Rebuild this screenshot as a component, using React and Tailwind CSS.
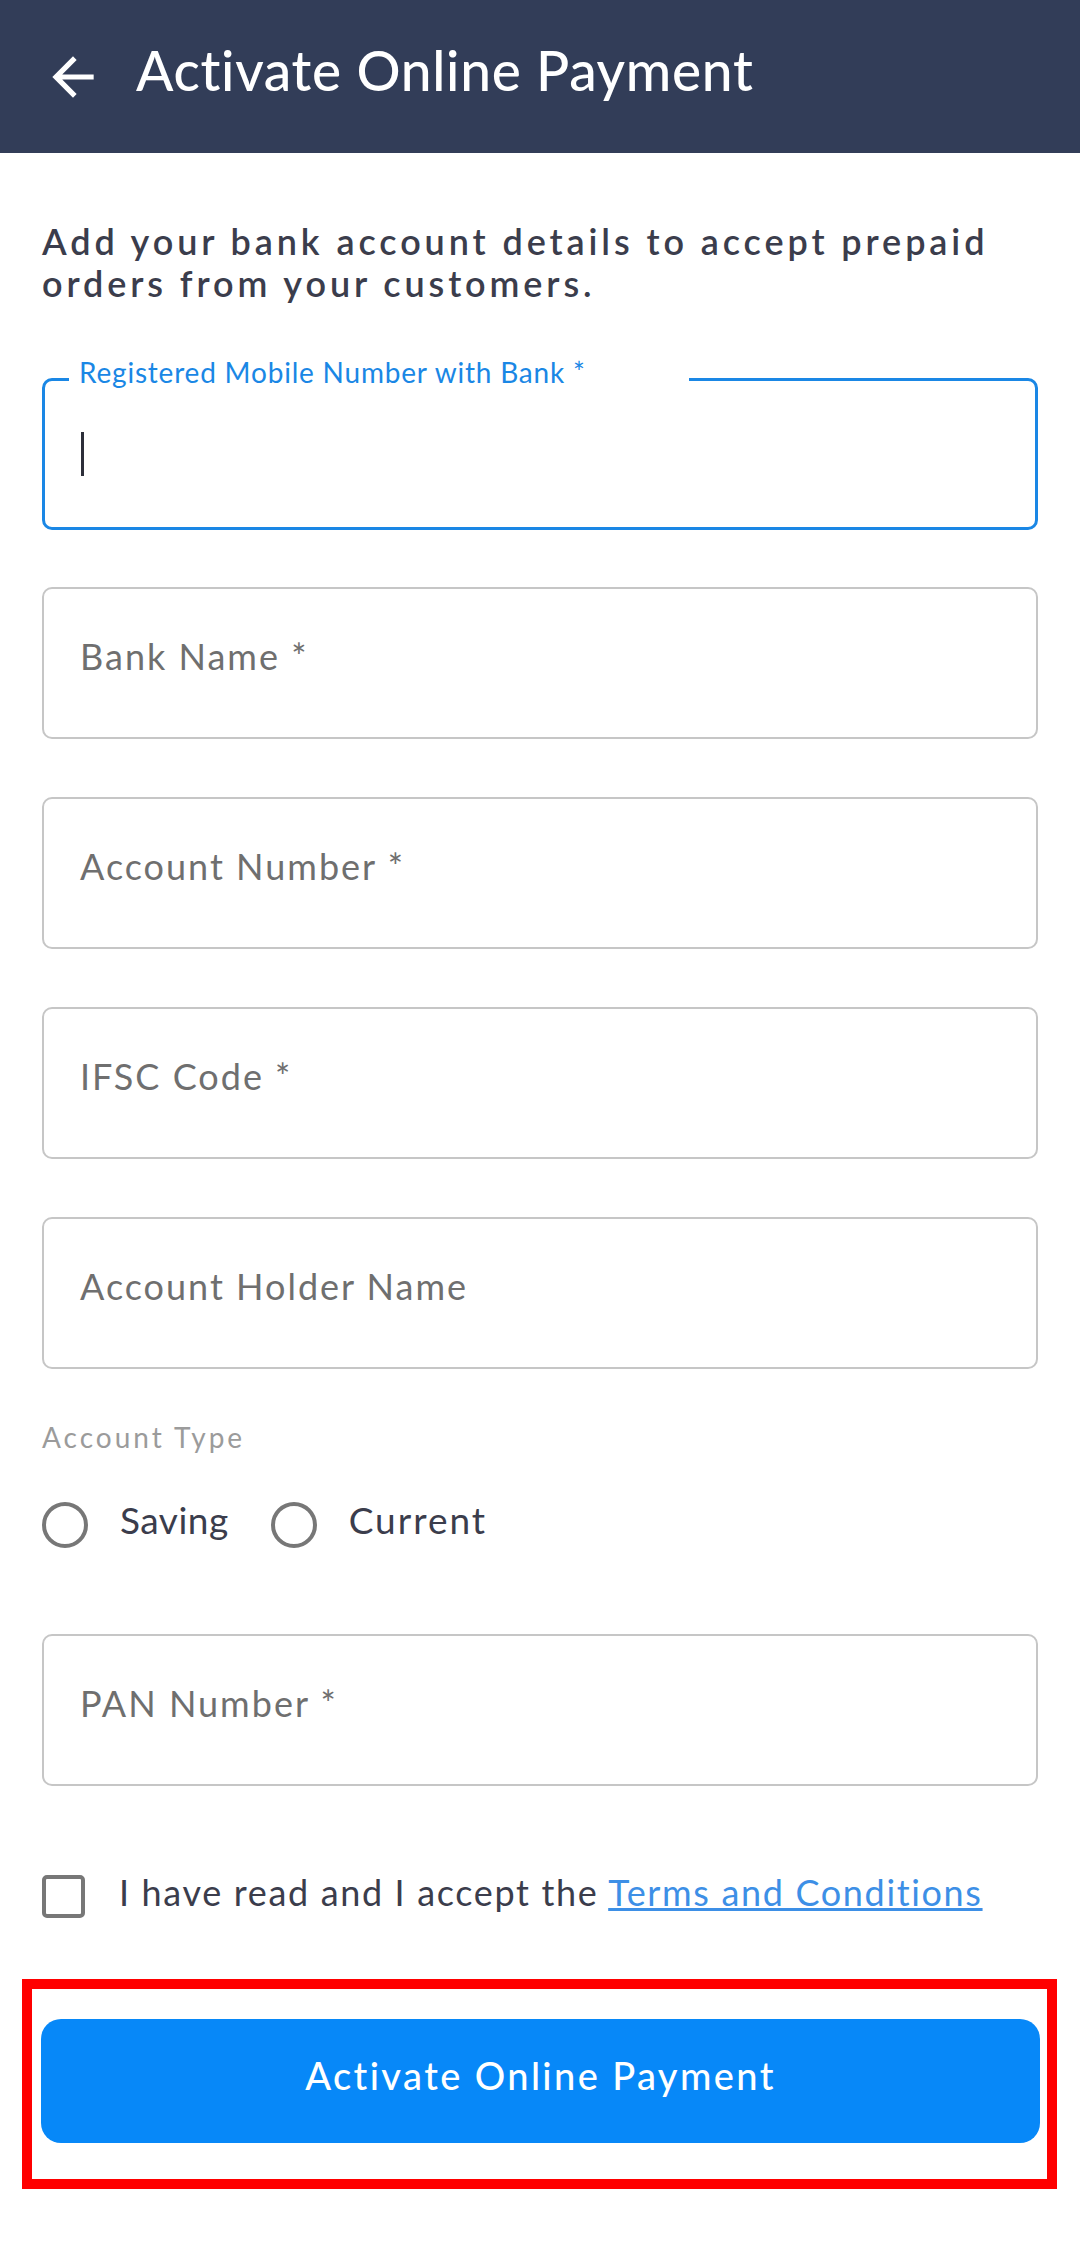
import React from "react";

// plain outlined input with placeholder
function Field({ label }) {
  return (
    <div className="h-[152px] border-2 border-[#c6c6c6] rounded-[10px] flex items-center pl-[36px] pb-[14px]">
      <span className="text-[36px] tracking-[2px] text-[#6f6f6f]">{label}</span>
    </div>
  );
}

export default function App() {
  return (
    <div className="min-h-[2265px] bg-white font-['Lato',sans-serif]">
      {/* header */}
      <div className="h-[153px] bg-[#323d58] flex items-center pl-[42px]">
        <svg width="62" height="62" viewBox="0 0 24 24" fill="#ffffff">
          <path d="M20 11H7.83l5.59-5.59L12 4l-8 8 8 8 1.41-1.41L7.83 13H20v-2z" />
        </svg>
        <h1 className="ml-[32px] -mt-[12px] text-[55px] leading-none font-medium tracking-[0.7px] text-white">
          Activate Online Payment
        </h1>
      </div>

      <div className="px-[42px]">
        <p className="mt-[67px] text-[36px] leading-[42px] font-semibold tracking-[3.9px] text-[#3b3d4c]">
          Add your bank account details to accept prepaid
          <br />
          orders from your customers.
        </p>

        {/* focused field */}
        <div className="relative mt-[74px] h-[152px] border-[3px] border-[#1a87e5] rounded-[10px] flex items-center">
          <span className="absolute left-[24px] -top-[23px] w-[620px] bg-white pl-[10px] text-[28px] leading-[28px] tracking-[0.8px] text-[#1a87e5]">
            Registered Mobile Number with Bank *
          </span>
          <div className="ml-[36px] w-[3px] h-[44px] bg-[#2d2f3a]" />
        </div>

        <div className="mt-[57px] flex flex-col gap-[58px]">
          <Field label="Bank Name *" />
          <Field label="Account Number *" />
          <Field label="IFSC Code *" />
          <Field label="Account Holder Name" />
        </div>

        <p className="mt-[51px] text-[28px] leading-[34px] tracking-[3px] text-[#9b9b9b]">Account Type</p>

        <div className="mt-[47px] h-[48px] flex items-center">
          <div className="w-[46px] h-[46px] rounded-full border-[4px] border-[#777777]" />
          <span className="ml-[32px] pb-[10px] text-[37px] leading-[48px] tracking-[0.5px] text-[#3b3d4c]">Saving</span>
          <div className="ml-[42px] w-[46px] h-[46px] rounded-full border-[4px] border-[#777777]" />
          <span className="ml-[32px] pb-[10px] text-[37px] leading-[48px] tracking-[2px] text-[#3b3d4c]">Current</span>
        </div>

        <div className="mt-[85px]">
          <Field label="PAN Number *" />
        </div>

        <div className="mt-[89px] h-[43px] flex items-center">
          <div className="w-[43px] h-[43px] rounded-[5px] border-[4px] border-[#777777]" />
          <p className="ml-[34px] pb-[8px] text-[36px] leading-[43px] tracking-[1.65px] text-[#3b3d4c]">
            I have read and I accept the{" "}
            <a className="text-[#3d8fe6] underline">Terms and Conditions</a>
          </p>
        </div>

        {/* highlighted submit */}
        <div className="mt-[61px] -ml-[20px] -mr-[19px] border-[10px] border-[#ff0000] pt-[30px] pb-[36px] pl-[9px] pr-[7px]">
          <button className="w-full h-[124px] rounded-[20px] bg-[#0788f8] flex items-center justify-center pb-[12px] text-[38px] font-medium tracking-[2.4px] text-white">
            Activate Online Payment
          </button>
        </div>
      </div>
    </div>
  );
}
